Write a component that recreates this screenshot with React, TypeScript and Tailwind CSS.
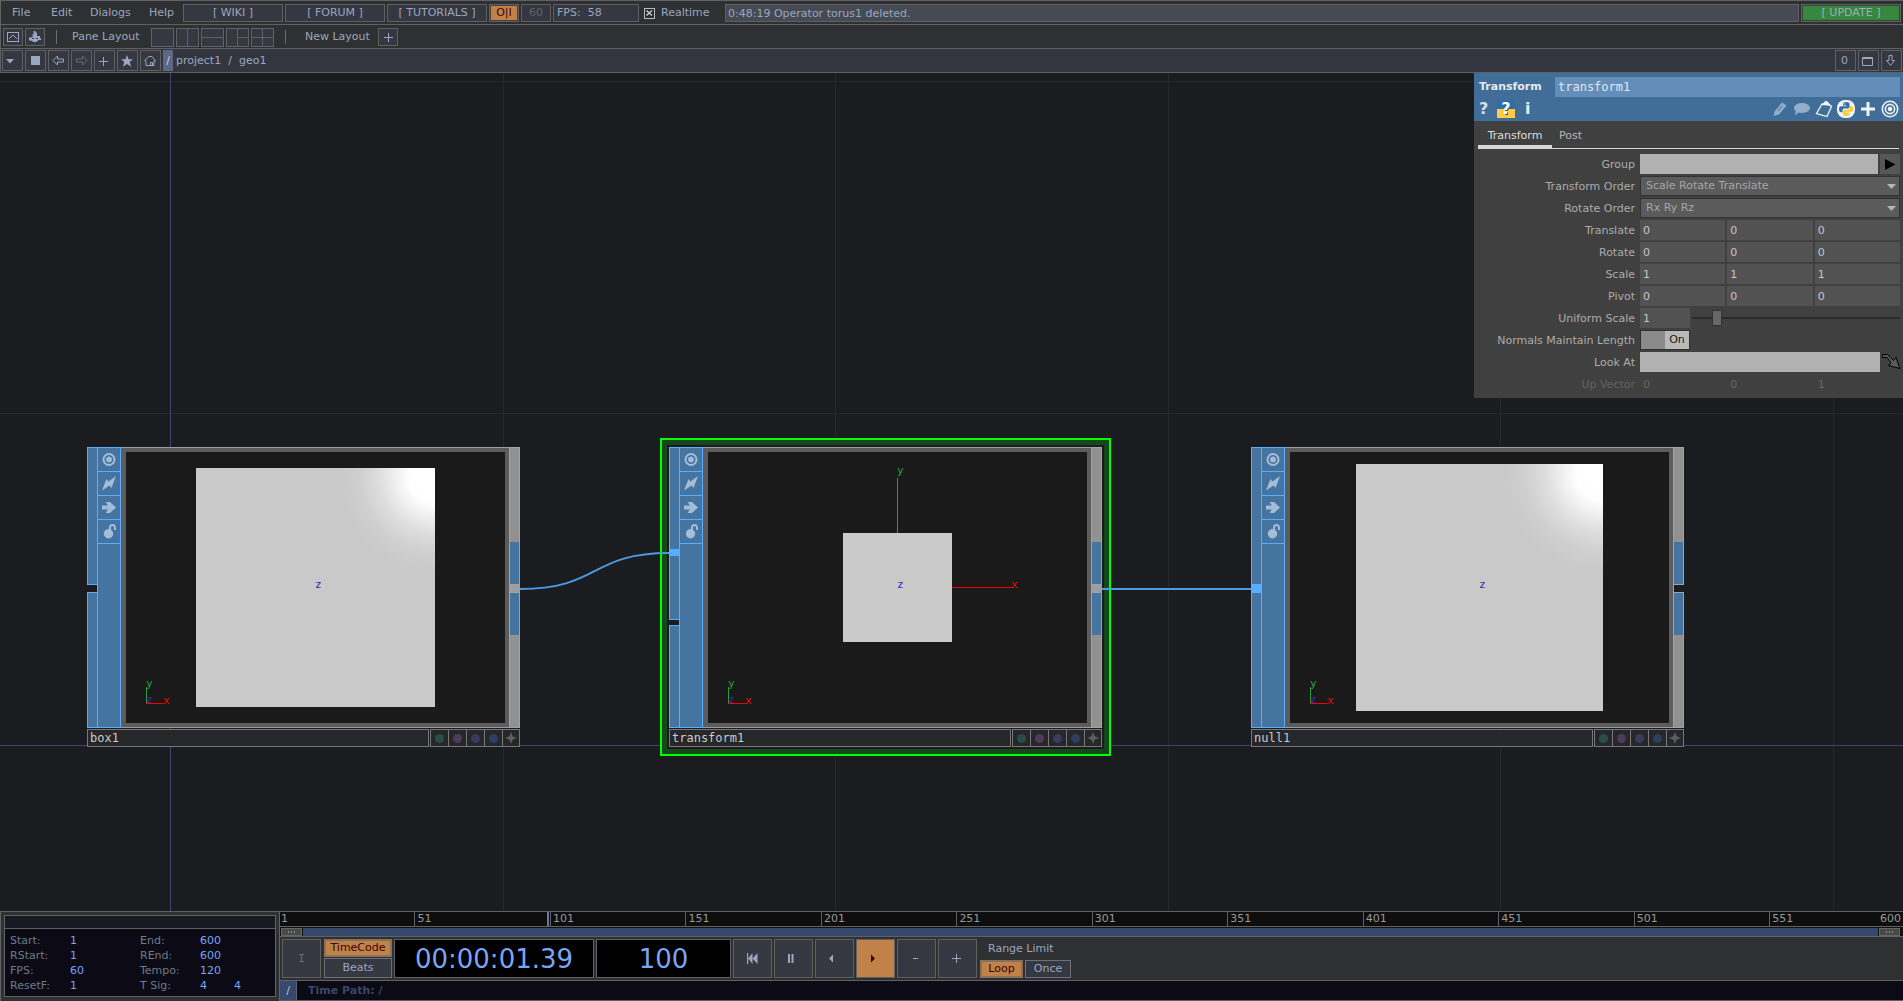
import React, { useId } from "react";
import clsx from "clsx";

const BTN = "flex items-center justify-center border border-[#5f6062] bg-[#353840] text-[#9ba6c0]";

/* ------------------------------ menu bar ------------------------------ */

function MenuBar() {
  return (
    <header className="flex h-6 shrink-0 items-center border-l border-t border-[#606164] bg-[#2f3032] pt-px pr-0.5 text-[#9ba6c0]">
      <nav className="flex items-center">
        <button className="w-[39px] pl-[11px] text-left">File</button>
        <button className="w-[39px] pl-[11px] text-left">Edit</button>
        <button className="w-[59px] pl-[11px] text-left">Dialogs</button>
        <button className="w-[45px] pl-[11px] text-left">Help</button>
      </nav>
      <div className="flex min-w-0 flex-1 items-center gap-0.5">
        {["[ WIKI ]", "[ FORUM ]", "[ TUTORIALS ]"].map((t) => (
          <a key={t} href="#" className={clsx(BTN, "h-[18px] w-[100px] whitespace-nowrap")}>
            {t}
          </a>
        ))}
        <button className="flex h-[18px] w-[30px] items-center justify-center border border-[#5f6062] bg-[#c08248] text-[#3d0008] ring-1 ring-inset ring-[#45413f]">
          O|I
        </button>
        <button className="flex h-[18px] w-[30px] items-center justify-center border border-[#5f6062] bg-[#353840] text-[#5f6266]">60</button>
        <output className="flex h-[18px] w-[86px] items-center border border-[#5f6062] bg-[#353840] pl-[3px] whitespace-pre text-[#9ba6c0]">
          {"FPS:  58"}
        </output>
        <label className="flex w-[82px] items-center gap-1.5 pl-[3px]">
          <span className="relative flex">
            <input type="checkbox" defaultChecked className="size-[11px] appearance-none border border-[#b9bbbe] bg-[#2a2b2d]" />
            <svg className="pointer-events-none absolute inset-0" width="11" height="11" viewBox="0 0 11 11" stroke="#c4c6ca" strokeWidth="1.600">
              <path d="M2.500 2.500l5.500 5M8 2.500l-5.500 5" />
            </svg>
          </span>
          Realtime
        </label>
        <input
          aria-label="Status message"
          readOnly
          defaultValue="0:48:19 Operator torus1 deleted."
          className="h-[18px] min-w-0 flex-1 border border-[#5f6062] bg-[#464a52] px-[2px] text-[#9ba6c0]"
        />
        <button className="h-[18px] w-[100px] border border-[#5f6062] bg-[#37873f] text-[#9db0b8] ring-1 ring-inset ring-[#3a443d]">
          [ UPDATE ]
        </button>
      </div>
    </header>
  );
}

/* ---------------------------- layout toolbar --------------------------- */

const PANES = [
  { name: "Single pane", d: "" },
  { name: "Split left and right", d: "M11.5 0V18" },
  { name: "Split top and bottom", d: "M0 8.5H23" },
  { name: "One left, two right", d: "M11.5 0V18M11.5 8.5H23" },
  { name: "Four panes", d: "M11.5 0V18M0 8.5H23" },
];

function LayoutBar() {
  return (
    <div className="flex h-6 shrink-0 items-center border-l border-t border-[#606164] bg-[#2f3032] pt-px pl-0.5 text-[#9ba6c0]">
      <button aria-label="Palette" className={clsx(BTN, "mr-0.5 h-[18px] w-5")}>
        <svg width="14" height="12" viewBox="0 0 14 12" fill="none" stroke="currentColor">
          <rect x="1.5" y="1.5" width="11" height="9" />
          <path d="M3 8l2-2 2-2 2 2 2 2" />
        </svg>
      </button>
      <button aria-label="Operator snippets" className={clsx(BTN, "h-[18px] w-5")}>
        <svg width="14" height="12" viewBox="0 0 14 12" fill="currentColor">
          <path d="M5.500 0h2v1.500H9V5h3v2l1 .5V9h-2.500l-2 2h-3L3 9.500H1V6.500h2l2-1L4 3.500h1.500z" />
          <path d="M4 7.500h2M8 7.500h2" stroke="#353840" />
        </svg>
      </button>
      <div className="ml-[11px] h-3.5 w-px shrink-0 bg-[#6a6c70]" />
      <span className="ml-[15px] w-[79px]">Pane Layout</span>
      <div className="flex gap-0.5">
        {PANES.map((p) => (
          <button key={p.name} aria-label={p.name} className="h-[19px] w-[23px] border border-[#606164] bg-[#353840]">
            <svg width="21" height="17" viewBox="1 0 21 17" stroke="#606164">
              <path d={p.d} />
            </svg>
          </button>
        ))}
      </div>
      <div className="ml-[11px] h-3.5 w-px shrink-0 bg-[#6a6c70]" />
      <span className="ml-[19px] w-[73px]">New Layout</span>
      <button aria-label="Add layout" className={clsx(BTN, "h-[18px] w-5")}>
        <svg width="9" height="9" viewBox="0 0 9 9" stroke="currentColor">
          <path d="M4.5 0v9M0 4.5h9" />
        </svg>
      </button>
    </div>
  );
}

/* ------------------------------- path bar ------------------------------ */

function PathBar() {
  const b = clsx(BTN, "size-[21px] shrink-0");
  return (
    <div className="flex h-[25px] shrink-0 items-center gap-0.5 border-y border-l border-[#606164] bg-[#34363f] pl-px text-[#9ba6c0]">
      <button aria-label="Pane type" className={b}>
        <svg width="13" height="11" viewBox="0 0 13 11" fill="currentColor"><path d="M0 4h8l-4 4.500z" /></svg>
      </button>
      <button aria-label="Stop" className={b}><span className="size-[9px] bg-[#9ba6c0]" /></button>
      <button aria-label="Back" className={b}>
        <svg width="13" height="11" viewBox="0 0 13 11" fill="none" stroke="currentColor"><path d="M1 5.500L5.500 1v3h6v3h-6v3z" /></svg>
      </button>
      <button aria-label="Forward" className={b}>
        <svg width="13" height="11" viewBox="0 0 13 11" fill="none" stroke="#686a6f"><path d="M12 5.500L7.500 1v3h-6v3h6v3z" /></svg>
      </button>
      <button aria-label="Add bookmark" className={b}>
        <svg width="13" height="13" viewBox="0 0 13 13" stroke="currentColor"><path d="M5.500 3v9M1 7.500h9" /></svg>
      </button>
      <button aria-label="Bookmarks" className={b}>
        <svg width="13" height="12" viewBox="0 0 13 12" fill="currentColor"><path d="M6 0l1.600 4.300H12L8.700 7l1.500 4.800L6 8.900l-4.200 2.900L3.300 7 0 4.300h4.400z" /></svg>
      </button>
      <button aria-label="Home" className={b}>
        <svg width="13" height="12" viewBox="0 0 13 12" fill="none" stroke="currentColor"><path d="M.5 5.500L5 1.500h3l3.500 4.500h-1.500v4.500h-8V6zM6.500 10V7.500h2V10" /></svg>
      </button>
      <nav className="flex h-[21px] flex-1 items-center">
        <a href="#" className="flex h-full w-[10px] items-center justify-center bg-[#5a6884] pt-px text-[#c8d0e0]">/</a>
        <a href="#" className="ml-[3px] pt-px">project1</a>
        <span className="mx-[7px] pt-px">/</span>
        <a href="#" className="pt-px">geo1</a>
      </nav>
      <button className={clsx(b, "pt-px pr-0.5")}>0</button>
      <button aria-label="Maximize pane" className={clsx(b, "pt-px pr-0.5")}>
        <svg width="12" height="11" viewBox="0 0 12 11" fill="none" stroke="currentColor"><path d="M.5 1.500h10v8h-10zM0 2.500h11" /></svg>
      </button>
      <button aria-label="Close pane" className={clsx(b, "mr-px pr-0.5")}>
        <svg width="11" height="13" viewBox="0 0 11 13" fill="none" stroke="currentColor"><path d="M4 1.500h3v5h2.500L5.500 11.500 1.500 6.500H4z" /></svg>
      </button>
    </div>
  );
}

/* -------------------------------- network ------------------------------ */

type Box = { x: number; y: number; size: number };
type NodeDef = {
  name: string;
  place: string;
  box: Box;
  axes?: boolean;
  input: "open" | "multi" | "wired";
  outputWired: boolean;
  selected?: boolean;
};

const NODES: NodeDef[] = [
  { name: "box1", place: "left-[87px]", box: { x: 70, y: 16, size: 239 }, input: "open", outputWired: true },
  { name: "transform1", place: "left-[669px]", box: { x: 135, y: 81, size: 109 }, axes: true, input: "multi", outputWired: true, selected: true },
  { name: "null1", place: "left-[1251px]", box: { x: 66, y: 12, size: 247 }, input: "wired", outputWired: false },
];

function Viewport({ box, axes }: { box: Box; axes?: boolean }) {
  const id = useId();
  return (
    <svg width="379" height="271" viewBox="0 0 379 271" className="bg-[#1a1a1a]" fontFamily="DejaVu Sans Mono, monospace" fontSize="11">
      <defs>
        <radialGradient id={id} cx="1" cy="0.04" r="0.4">
          <stop offset="0" stopColor="#fff" />
          <stop offset="0.27" stopColor="#fefefe" />
          <stop offset="0.42" stopColor="#efefef" />
          <stop offset="0.58" stopColor="#dedede" />
          <stop offset="0.78" stopColor="#d0d0d0" />
          <stop offset="1" stopColor="#c9c9c9" />
        </radialGradient>
      </defs>
      <rect x={box.x} y={box.y} width={box.size} height={box.size} fill={axes ? "#cacaca" : `url(#${id})`} />
      {axes && (
        <g>
          <path d="M189.500 26v55" stroke="#2f9a3f" />
          <path d="M244 135.500h61" stroke="#f00000" />
          <text x="189" y="22" fill="#28a03a">y</text>
          <text x="303" y="136" fill="#ff0000">x</text>
        </g>
      )}
      <text x="189" y="136" fill="#3a28b0">z</text>
      <path d="M20.500 235v16" stroke="#2f9a3f" />
      <path d="M20 251.500h17" stroke="#f00000" />
      <text x="20" y="235" fill="#28a03a">y</text>
      <text x="20" y="251" fill="#3a28b0">z</text>
      <text x="37" y="252" fill="#ff0000">x</text>
    </svg>
  );
}

const FLAGS = [
  {
    name: "Viewer active",
    icon: (
      <g fill="none" stroke="currentColor">
        <circle cx="7" cy="7.500" r="5.500" strokeWidth="2" />
        <circle cx="7" cy="7.500" r="2.500" fill="currentColor" />
      </g>
    ),
  },
  { name: "Bypass", icon: <path fill="currentColor" d="M14 0L9.500 12 7.500 9.500 0 14.500 4.500 3 6.500 5.500z" /> },
  { name: "Render", icon: <path fill="currentColor" d="M0 5.500h6L3.500 2H8L14 7.500 8 13H3.500L6 9.500H0z" /> },
  {
    name: "Lock",
    icon: (
      <g>
        <circle cx="6.500" cy="9.800" r="4.700" fill="currentColor" />
        <path d="M8 6V3.500a2.500 2.500 0 015 0V6" fill="none" stroke="currentColor" strokeWidth="2" />
      </g>
    ),
  },
];

const SEG = "border border-r-0 border-[#5aaeff] bg-[#4674a0]";

function InputRail({ kind }: { kind: NodeDef["input"] }) {
  if (kind === "open")
    return (
      <div className="flex w-2.5 flex-col gap-[7px]">
        <div className={clsx(SEG, "h-[138px]")} />
        <div className={clsx(SEG, "flex-1")} />
      </div>
    );
  if (kind === "multi")
    return (
      <div className="flex w-2.5 flex-col gap-[5px]">
        <div className={clsx(SEG, "h-[173px] pt-[101px]")}>
          <div className="h-[7px] bg-[#5aaeff]" />
        </div>
        <div className={clsx(SEG, "flex-1")} />
      </div>
    );
  return (
    <div className={clsx(SEG, "w-2.5 pt-[136px]")}>
      <div className="h-[9px] bg-[#5aaeff]" />
    </div>
  );
}

function OutputRail({ wired }: { wired: boolean }) {
  const edge = "border-l border-r border-[#a3a3a3]";
  return (
    <div className="flex w-[11px] flex-col">
      <div className={clsx(edge, "h-[95px] border-t bg-[#919191]")} />
      <div className={clsx(edge, "h-[42px] bg-[#4674a0]")} />
      <div className={clsx("h-[9px] border-l border-y border-[#a3a3a3]", wired ? "bg-[#9c9ea2]" : "bg-[#1b1c1f]")} />
      <div className={clsx(edge, "h-[42px] bg-[#4674a0]")} />
      <div className={clsx(edge, "flex-1 border-b bg-[#919191]")} />
    </div>
  );
}

function OpNode({ node }: { node: NodeDef }) {
  return (
    <article className={clsx("absolute top-[374px] w-[433px]", node.place)}>
      {node.selected && (
        <div className="absolute -inset-[9px] border-2 border-[#00ff00] bg-[#16471b] p-[5px]">
          <div className="h-full bg-[#1b1c1f]" />
        </div>
      )}
      <div className="relative flex h-[281px]">
        <InputRail kind={node.input} />
        <div className="w-6 border border-[#5aaeff] bg-[#4674a0] text-[#a3bdd8]">
          {FLAGS.map((f) => (
            <button key={f.name} aria-label={`${f.name} ${node.name}`} className="flex h-6 w-full items-center justify-center border-b border-[#5aaeff]">
              <svg width="14" height="15" viewBox="0 0 14 15">{f.icon}</svg>
            </button>
          ))}
        </div>
        <div className="flex-1 border-y border-[#9b9b9b] bg-[#5c5c5c] py-1 pl-[5px]">
          <Viewport box={node.box} axes={node.axes} />
        </div>
        <OutputRail wired={node.outputWired} />
      </div>
      <div className="relative mt-px flex h-[18px] gap-px">
        <input
          aria-label="Operator name"
          defaultValue={node.name}
          className="min-w-0 flex-1 border border-[#77777b] bg-[#262729] px-[2px] font-['DejaVu_Sans_Mono',monospace] text-xs text-[#cacaca]"
        />
        <div className="flex divide-x divide-[#77777b] border border-[#77777b] bg-[#262729]">
          {["bg-[#2a4c4a]", "bg-[#50395a]", "bg-[#3e3860]", "bg-[#2c3e62]"].map((c) => (
            <button key={c} aria-label={`Flag colour of ${node.name}`} className="flex w-[18px] items-center justify-center">
              <span className={clsx("size-[9px] rounded-full", c)} />
            </button>
          ))}
          <button aria-label={`Options of ${node.name}`} className="flex w-4 items-center justify-center">
            <svg width="12" height="12" viewBox="0 0 11 11" fill="#5e5e5e"><path d="M5.500 0L7 4l4 1.500L7 7l-1.500 4L4 7 0 5.500 4 4z" /></svg>
          </button>
        </div>
      </div>
    </article>
  );
}

function Network() {
  return (
    <main className="relative min-h-0 flex-1 overflow-hidden bg-[#1b1c1f]">
      <svg className="absolute inset-0 size-full" stroke="#27282e">
        {[503, 835, 1168, 1500, 1833].map((x) => (
          <line key={x} x1={x + 0.5} x2={x + 0.5} y1="0" y2="100%" />
        ))}
        {[8, 340].map((y) => (
          <line key={y} y1={y + 0.5} y2={y + 0.5} x1="0" x2="100%" />
        ))}
        <line x1="170.500" x2="170.500" y1="0" y2="100%" stroke="#463f70" />
        <line y1="672.500" y2="672.500" x1="0" x2="100%" stroke="#463f70" />
      </svg>
      {NODES.map((n) => (
        <OpNode key={n.name} node={n} />
      ))}
      <svg className="pointer-events-none absolute inset-0 size-full" fill="none" stroke="#4a9ae8" strokeWidth="2">
        <path d="M520 516C600 516 590 480 669 480" />
        <path d="M1102 516H1251" />
        <path d="M661 438V683M1110 438V683" stroke="#00ff00" opacity="0.4" />
      </svg>
      <ParameterPanel />
    </main>
  );
}

/* --------------------------- parameter dialog -------------------------- */

function Row({ label, dim, children }: { label: string; dim?: boolean; children: React.ReactNode }) {
  return (
    <div role="group" aria-label={label} className="grid h-5 grid-cols-[162px_minmax(0,1fr)] items-center gap-1">
      <span className={clsx("pt-px pr-px text-right whitespace-nowrap", dim ? "text-[#636363]" : "text-[#acacac]")}>{label}</span>
      <div className="flex h-5 items-center gap-0.5">{children}</div>
    </div>
  );
}

function Triple({ label, values, dim }: { label: string; values: string[]; dim?: boolean }) {
  return (
    <Row label={label} dim={dim}>
      {values.map((v, i) => (
        <input
          key={i}
          aria-label={`${label} ${"XYZ"[i]}`}
          defaultValue={v}
          disabled={dim}
          className={clsx("h-5 min-w-0 flex-1 px-[3px]", dim ? "bg-transparent text-[#666]" : "bg-[#525252] text-[#c6c6c6]")}
        />
      ))}
    </Row>
  );
}

function Menu({ label, options }: { label: string; options: string[] }) {
  return (
    <Row label={label}>
      <div className="relative h-5 flex-1">
        <select aria-label={label} className="size-full appearance-none border border-[#333] bg-[#5b5b5b] px-[5px] text-[#a6a6a6]">
          {options.map((o) => (
            <option key={o}>{o}</option>
          ))}
        </select>
        <svg className="pointer-events-none absolute right-1 top-2" width="9" height="5" viewBox="0 0 9 5" fill="#b5b5b5"><path d="M0 0h9L4.500 5z" /></svg>
      </div>
    </Row>
  );
}

function PythonLogo({ size }: { size: number }) {
  return (
    <svg width={size} height={size} viewBox="0 0 18 18">
      <rect width="18" height="18" rx="8" fill="#f2f5f8" />
      <path d="M9 2C6.500 2 6 3 6 4v1.500h3.500v.7H4.200C2.800 6.200 2 7.500 2 9.200s1 3 2.200 3H5.500v-1.800C5.500 9 6.500 8.500 7.500 8.500H11c1 0 1.500-.8 1.500-1.700V4C12.500 2.800 11.300 2 9 2z" fill="#2f6fa8" />
      <path d="M9.200 16c2.500 0 3.200-1 3.200-2v-1.500H9v-.7h5.200c1.300 0 2-1.200 2-2.900s-.8-2.900-2-2.900H13v1.700c0 1.400-1 2.100-2 2.100H7.500c-1 0-1.700.8-1.700 1.700V14c0 1.200 1.300 2 3.400 2z" fill="#ffcc33" />
      <circle cx="7.600" cy="3.900" r=".7" fill="#f2f5f8" />
    </svg>
  );
}

const ICON_BTN = "flex h-[22px] w-[22px] items-center justify-center";

function ParameterPanel() {
  return (
    <aside className="absolute right-0 top-0 w-[429px] bg-[#404040] pb-1">
      <header className="bg-[#416e98] pt-1">
        <div className="flex items-center pl-[5px] pr-[3px]">
          <h2 className="w-[76px] font-bold text-[#e6e9ec]">Transform</h2>
          <input
            aria-label="Operator name"
            defaultValue="transform1"
            className="h-5 min-w-0 flex-1 bg-[#628eb9] px-[3px] font-['DejaVu_Sans_Mono',monospace] text-xs text-[#e2e6ea]"
          />
        </div>
        <div className="flex h-6 items-center pl-[5px] pr-0.5">
          <button aria-label="Help" className="w-[18px] text-left text-base/6 font-bold text-[#d6e0ea]">?</button>
          <button aria-label="Python help" className="mr-2.5">
            <span className="flex size-[18px] items-center justify-center bg-linear-to-b from-[#2f6ea6] from-50% to-[#ffcc44] to-50% text-base/[18px] font-bold text-white [text-shadow:1px_1px_0_#2f5f90]">
              ?
            </span>
          </button>
          <button aria-label="Info" className="text-base/6 font-bold text-[#e6ebf0]">i</button>
          <div className="ml-auto flex">
            <button aria-label="Edit" className={ICON_BTN}>
              <svg width="16" height="16" viewBox="0 0 16 16" fill="#93aecb"><path d="M10 1.500l4.500 3L7 13.500l-4.500-3zM2.500 10.500L7 13.500 1.500 15z" /><path d="M6 10l4.500-5.500" stroke="#416e98" /></svg>
            </button>
            <button aria-label="Comment" className={ICON_BTN}>
              <svg width="18" height="16" viewBox="0 0 18 16" fill="#93aecb"><ellipse cx="9" cy="7" rx="8" ry="5" /><path d="M3 9l-1 5 5-3z" /></svg>
            </button>
            <button aria-label="Clipboard" className={ICON_BTN}>
              <svg width="18" height="18" viewBox="0 0 18 18" fill="none" stroke="#f2f5f8" strokeWidth="1.300"><path d="M7 4L1.500 13.500 12 16.500l4.500-10L14 4.500z" /><path d="M7.500 4.500L9.500 3l1-1.500 2 .8L14.500 5z" fill="#f2f5f8" /></svg>
            </button>
            <button aria-label="Python" className={ICON_BTN}><PythonLogo size={18} /></button>
            <button aria-label="Add custom parameter" className={ICON_BTN}>
              <svg width="14" height="14" viewBox="0 0 14 14" stroke="#eef2f6" strokeWidth="3"><path d="M7 0v14M0 7h14" /></svg>
            </button>
            <button aria-label="Target" className={ICON_BTN}>
              <svg width="18" height="18" viewBox="0 0 18 18" fill="none" stroke="#eef2f6" strokeWidth="1.600"><circle cx="9" cy="9" r="7.700" /><circle cx="9" cy="9" r="4.600" /><circle cx="9" cy="9" r="1.500" fill="#eef2f6" /></svg>
            </button>
          </div>
        </div>
      </header>
      <div role="tablist" className="ml-1 mr-1 flex h-7 border-b border-[#d6d6d6]">
        <button role="tab" aria-selected="true" className="w-[74px] border-b-[3px] border-[#d6d6d6] pt-1.5 text-[#dedede]">Transform</button>
        <button role="tab" aria-selected="false" className="px-[7px] pt-[3px] text-[#b4b4b4]">Post</button>
      </div>
      <form className="flex flex-col gap-0.5 pt-[5px] pr-[3px]" onSubmit={(e) => e.preventDefault()}>
        <Row label="Group">
          <input aria-label="Group" className="h-5 min-w-0 flex-1 bg-[#b1b1b1] px-1 text-black" />
          <button type="button" aria-label="Choose group" className="flex size-5 items-center justify-center bg-[#575757]">
            <svg width="11" height="11" viewBox="0 0 11 11"><path d="M0 0l10.500 5.500L0 11z" /></svg>
          </button>
        </Row>
        <Menu label="Transform Order" options={["Scale Rotate Translate", "Scale Translate Rotate"]} />
        <Menu label="Rotate Order" options={["Rx Ry Rz", "Rx Rz Ry"]} />
        <Triple label="Translate" values={["0", "0", "0"]} />
        <Triple label="Rotate" values={["0", "0", "0"]} />
        <Triple label="Scale" values={["1", "1", "1"]} />
        <Triple label="Pivot" values={["0", "0", "0"]} />
        <Row label="Uniform Scale">
          <input aria-label="Uniform Scale" defaultValue="1" className="h-5 w-[50px] bg-[#525252] px-[3px] text-[#c6c6c6]" />
          <input
            type="range"
            aria-label="Uniform Scale slider"
            min="0"
            max="10"
            defaultValue="1"
            className="h-5 min-w-0 flex-1 appearance-none bg-transparent [&::-webkit-slider-runnable-track]:h-0.5 [&::-webkit-slider-runnable-track]:bg-[#2a2a2a] [&::-webkit-slider-thumb]:-mt-[7px] [&::-webkit-slider-thumb]:h-4 [&::-webkit-slider-thumb]:w-2.5 [&::-webkit-slider-thumb]:appearance-none [&::-webkit-slider-thumb]:border [&::-webkit-slider-thumb]:border-[#333] [&::-webkit-slider-thumb]:bg-[#686868]"
          />
        </Row>
        <Row label="Normals Maintain Length">
          <button type="button" role="switch" aria-checked="true" aria-label="Normals Maintain Length" className="flex h-5 w-[50px] border border-[#303030] bg-[#8b8b8b]">
            <span className="ml-6 flex h-full flex-1 items-center justify-center bg-[#b9b9b9] text-[#1a1a1a]">On</span>
          </button>
        </Row>
        <Row label="Look At">
          <input aria-label="Look At" className="h-5 min-w-0 flex-1 bg-[#b1b1b1] px-1 text-black" />
          <button type="button" aria-label="Choose operator" className="size-[18px]">
            <svg width="19" height="18" viewBox="0 0 19 18" fill="#5a5a5a" stroke="#000"><path d="M.5 1.500h5l6 6 2.500-3L18 15.500 6.500 12.500 9 9.500 5 4.500H.5z" /></svg>
          </button>
        </Row>
        <Triple label="Up Vector" values={["0", "0", "1"]} dim />
      </form>
    </aside>
  );
}

/* ------------------------------- timeline ------------------------------ */

const INFO = [
  ["Start:", "1", "End:", "600", ""],
  ["RStart:", "1", "REnd:", "600", ""],
  ["FPS:", "60", "Tempo:", "120", ""],
  ["ResetF:", "1", "T Sig:", "4", "4"],
];

function RangeInfo() {
  return (
    <section className="w-[279px] shrink-0 border-l border-[#606164] bg-[#2f3032] p-[3px] pb-1">
      <div className="flex h-full flex-col border border-[#606164] bg-[#0c0a15]">
        <div className="h-[13px] border-b border-[#606164] bg-[#191924]" />
        <table className="ml-[5px] mt-1 text-left leading-[15px]">
          <tbody>
            {INFO.map(([a, b, c, d, e]) => (
              <tr key={a} className="text-[#7ba4f7]">
                <th className="w-[60px] py-0 font-normal text-[#6b7c8c]">{a}</th>
                <td className="w-[70px]">{b}</td>
                <th className="w-[60px] font-normal text-[#6b7c8c]">{c}</th>
                <td className="w-[34px]">{d}</td>
                <td>{e}</td>
              </tr>
            ))}
          </tbody>
        </table>
      </div>
    </section>
  );
}

const TRANSPORT = [
  { name: "Reset", d: "M0 0h1.200v11H0zM5.500 0v11L1.200 5.500zM10.500 0v11L5.500 5.500z" },
  { name: "Pause", d: "M0 1h2v9H0zM3.500 1h2v9h-2z" },
  { name: "Play reverse", d: "M4 1.500v8l-4-4z" },
  { name: "Play", d: "M1 1.500v8l4-4z" },
  { name: "Step back", d: "M2 5h5v1H2z" },
  { name: "Step forward", d: "M0 5h9v1H0zM4 1h1v9H4z" },
];

const ACTIVE = "bg-[#c08248] text-[#3d0008]";

function Timeline() {
  const ticks = [1, 51, 101, 151, 201, 251, 301, 351, 401, 451, 501, 551];
  return (
    <section className="flex min-w-0 flex-1 flex-col border-l border-[#606164]">
      <div className="relative h-3.5 bg-[#0e0e0e] text-[#999]">
        {ticks.map((t) => (
          <span
            key={t}
            className={clsx("absolute top-0 -ml-px flex h-full items-center pl-[2px]", t > 1 && "border-l border-[#606164]")}
            style={{ left: `${((t - 1) / 599) * 100}%` }}
          >
            {t}
          </span>
        ))}
        <span className="absolute top-0 -ml-px h-full w-0.5 bg-[#6c78a8]" style={{ left: `${(99 / 599) * 100}%` }} />
        <span className="absolute right-0.5 top-0 flex h-full items-center">600</span>
      </div>
      <div className="flex h-[11px] items-center gap-px border-y border-[#606164] bg-[#111] pl-px pr-[3px]">
        <button aria-label="Range start" className="flex h-2 w-[21px] items-center justify-center gap-0.5 border border-[#666] bg-[#4a4a4a]">
          <i className="h-0.5 w-px bg-[#888]" /><i className="h-0.5 w-px bg-[#888]" /><i className="h-0.5 w-px bg-[#888]" />
        </button>
        <div className="h-2 flex-1 bg-[#36486c]" />
        <button aria-label="Range end" className="flex h-2 w-[21px] items-center justify-center gap-0.5 border border-[#666] bg-[#4a4a4a]">
          <i className="h-0.5 w-px bg-[#888]" /><i className="h-0.5 w-px bg-[#888]" /><i className="h-0.5 w-px bg-[#888]" />
        </button>
      </div>
      <div className="flex h-[43px] items-center gap-0.5 bg-[#2f3032] pl-0.5">
        <button className="flex h-[39px] w-[39px] items-center justify-center border border-[#5f6062] bg-[#353840] font-['DejaVu_Sans_Mono',monospace] text-[#6a6c70]">I</button>
        <div className="ml-px flex w-[68px] flex-col gap-px">
          <button className={clsx("h-[18px] border-2 border-[#85715c]", ACTIVE, "leading-[14px]")}>TimeCode</button>
          <button className="h-5 border border-[#6c6f78] bg-[#353840] text-[#9ba6c0]">Beats</button>
        </div>
        <output className="flex h-[39px] w-[200px] items-center justify-center border border-[#606164] bg-black text-[26px] leading-none text-[#7ba4f7]">
          00:00:01.39
        </output>
        <output className="flex h-[39px] w-[135px] items-center justify-center border border-[#606164] bg-black text-[26px] leading-none text-[#7ba4f7]">
          100
        </output>
        {TRANSPORT.map((t) => (
          <button
            key={t.name}
            aria-label={t.name}
            className={clsx(
              "flex size-[39px] items-center justify-center border border-[#5f6062]",
              t.name === "Play" ? ACTIVE : "bg-[#353840] text-[#9ba6c0]",
            )}
          >
            <svg width="11" height="11" viewBox="0 0 11 11" fill="currentColor"><path d={t.d} /></svg>
          </button>
        ))}
        <div className="flex h-[39px] flex-col justify-between pl-px text-[#9ba6c0]">
          <span className="pl-2 pt-[3px]">Range Limit</span>
          <div className="flex gap-0.5">
            <button className={clsx("h-[18px] w-[43px] border-2 border-[#85715c] leading-[14px]", ACTIVE)}>Loop</button>
            <button className="h-[18px] w-[46px] border border-[#6c6f78] bg-[#353840]">Once</button>
          </div>
        </div>
      </div>
      <div className="flex h-[21px] border-y border-[#606164] bg-[#0c0a15]">
        <a href="#" aria-label="Time path root" className="flex w-[17px] items-center justify-center border-r border-[#55627e] bg-[#36486c] pt-px text-[#b8c2d4]">/</a>
        <span className="flex items-center pt-px pl-[11px] font-bold text-[#36486c]">Time Path: /</span>
      </div>
    </section>
  );
}

export default function App() {
  return (
    <div className="flex h-screen flex-col overflow-hidden bg-[#2f3032] font-['DejaVu_Sans',sans-serif] text-[11px] leading-[14px]">
      <MenuBar />
      <LayoutBar />
      <PathBar />
      <Network />
      <footer className="flex h-[90px] shrink-0 border-t border-[#606164] bg-[#2f3032]">
        <RangeInfo />
        <Timeline />
      </footer>
    </div>
  );
}
